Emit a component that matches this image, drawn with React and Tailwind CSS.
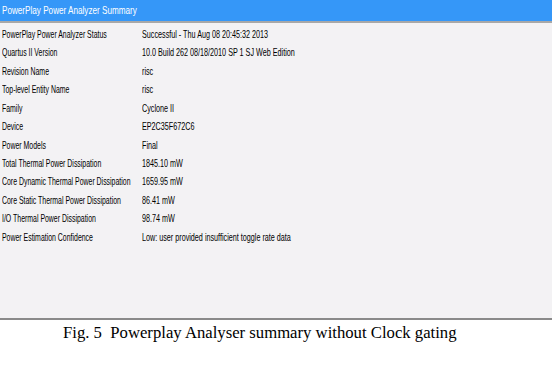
import React from 'react';

const rows = [
  ['PowerPlay Power Analyzer Status', 'Successful - Thu Aug 08 20:45:32 2013'],
  ['Quartus II Version', '10.0 Build 262 08/18/2010 SP 1 SJ Web Edition'],
  ['Revision Name', 'risc'],
  ['Top-level Entity Name', 'risc'],
  ['Family', 'Cyclone II'],
  ['Device', 'EP2C35F672C6'],
  ['Power Models', 'Final'],
  ['Total Thermal Power Dissipation', '1845.10 mW'],
  ['Core Dynamic Thermal Power Dissipation', '1659.95 mW'],
  ['Core Static Thermal Power Dissipation', '86.41 mW'],
  ['I/O Thermal Power Dissipation', '98.74 mW'],
  ['Power Estimation Confidence', 'Low: user provided insufficient toggle rate data'],
];

const uiFont = { fontFamily: '"Liberation Sans", Arial, sans-serif' };

export default function App() {
  return (
    <div className="w-[552px] h-[365px] bg-white flex flex-col overflow-hidden">
      <div
        className="h-[21px] bg-[#3597f8] text-white text-[11px] flex items-center px-[2px] whitespace-nowrap"
        style={uiFont}
      >
        <span className="inline-block scale-x-[0.74] origin-left">PowerPlay Power Analyzer Summary</span>
      </div>
      <div className="h-[2px] bg-[#a8a8a8]" />
      <div className="h-[295px] bg-[#f3f2f4] pt-[2px] text-[11px] text-black" style={uiFont}>
        {rows.map(([label, value]) => (
          <div key={label} className="h-[18.45px] flex items-center whitespace-nowrap">
            <div className="w-[142px] pl-[2px]">
              <span className="inline-block scale-x-[0.63] origin-left">{label}</span>
            </div>
            <div>
              <span className="inline-block scale-x-[0.655] origin-left">{value}</span>
            </div>
          </div>
        ))}
      </div>
      <div className="h-[2px] bg-[#8a8a8a]" />
      <div
        className="flex-1 pl-[63px] text-[16.7px] text-black whitespace-nowrap"
        style={{ fontFamily: '"Liberation Serif", "Times New Roman", serif' }}
      >
        Fig. 5&nbsp;&nbsp;Powerplay Analyser summary without Clock gating
      </div>
    </div>
  );
}
